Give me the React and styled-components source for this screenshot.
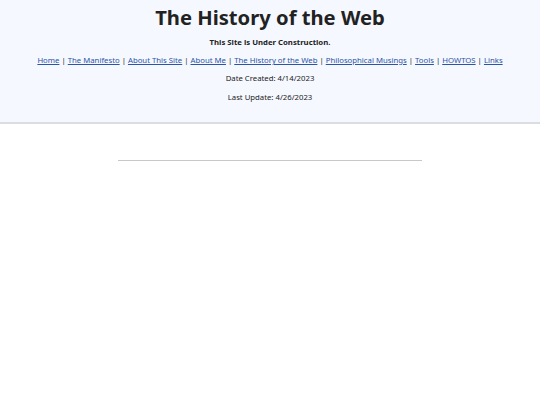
import React from 'react';
import styled, { createGlobalStyle } from 'styled-components';

const GlobalStyle = createGlobalStyle`
  body {
    margin: 0;
    background: #ffffff;
    font-family: "Noto Sans", "Open Sans", sans-serif;
    color: #222222;
  }
`;

const Header = styled.header`
  background-color: #f5f8ff;
  border-bottom: 2px solid #dcdde3;
  padding: 3px 0 16px;
  text-align: center;
`;

const Title = styled.h1`
  margin: 0;
  font-size: 20.2px;
  font-weight: 700;
  line-height: 28px;
  color: #222222;
`;

const Line = styled.p`
  margin: 0;
  font-size: 7.75px;
  line-height: 18px;
  font-weight: ${(p) => (p.bold ? 700 : 400)};
  margin-top: ${(p) => p.top || 0}px;
`;

const NavLink = styled.a`
  color: #2b54a8;
  text-decoration: underline;
`;

const Main = styled.main`
  padding-top: 36px;
`;

const Rule = styled.hr`
  width: 304px;
  margin: 0 auto;
  border: none;
  border-top: 1px solid #c8c8c8;
`;

const links = [
  'Home',
  'The Manifesto',
  'About This Site',
  'About Me',
  'The History of the Web',
  'Philosophical Musings',
  'Tools',
  'HOWTOS',
  'Links',
];

export default function App() {
  return (
    <>
      <GlobalStyle />
      <Header>
        <Title>The History of the Web</Title>
        <Line bold top={2}>This Site is Under Construction.</Line>
        <Line>
          {links.map((l, i) => (
            <React.Fragment key={l}>
              {i > 0 && ' | '}
              <NavLink href="#">{l}</NavLink>
            </React.Fragment>
          ))}
        </Line>
        <Line>Date Created: 4/14/2023</Line>
        <Line top={1}>Last Update: 4/26/2023</Line>
      </Header>
      <Main>
        <Rule />
      </Main>
    </>
  );
}
